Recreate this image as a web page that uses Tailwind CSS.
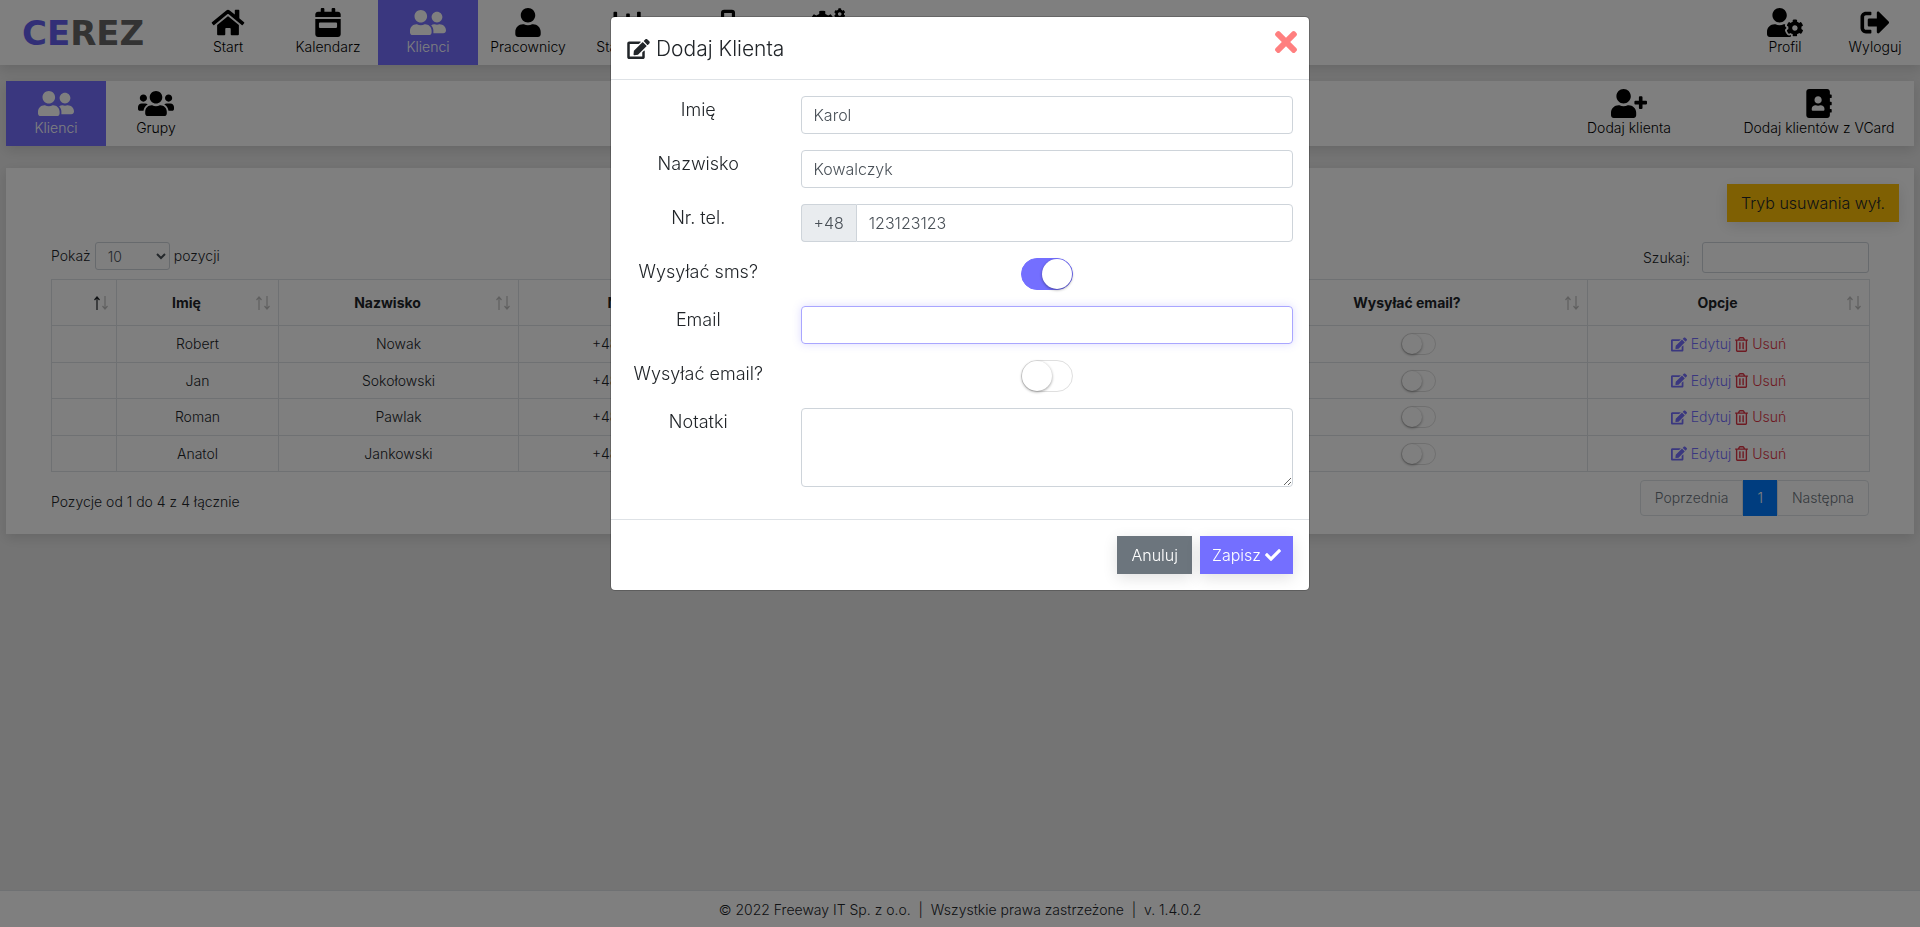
<!DOCTYPE html>
<html lang="pl">
<head>
    <meta charset="UTF-8">
    <meta name="viewport" content="width=device-width, initial-scale=1.0">
    <title>CEREZ - Klienci</title>
    <script src="https://cdn.jsdelivr.net/npm/@tailwindcss/browser@4"></script>
    <style>
        body {
            font-family: 'Century Gothic', Inter, sans-serif;
        }
    </style>
</head>
<body class="min-h-screen flex flex-col bg-[#e9e9e9] text-[#212529] text-sm font-light">

    <!-- icons -->
    <svg class="hidden">
        <symbol id="i-home" viewBox="0 0 576 512"><path d="M280.37 148.26L96 300.11V464a16 16 0 0 0 16 16l112.06-.29a16 16 0 0 0 15.92-16V368a16 16 0 0 1 16-16h64a16 16 0 0 1 16 16v95.64a16 16 0 0 0 16 16.05L464 480a16 16 0 0 0 16-16V300L295.67 148.26a12.19 12.19 0 0 0-15.3 0zM571.6 251.47L488 182.56V44.05a12 12 0 0 0-12-12h-56a12 12 0 0 0-12 12v72.61L318.47 43a48 48 0 0 0-61 0L4.34 251.47a12 12 0 0 0-1.6 16.9l25.5 31A12 12 0 0 0 45.15 301l235.22-193.74a12.19 12.19 0 0 1 15.3 0L530.9 301a12 12 0 0 0 16.9-1.6l25.5-31a12 12 0 0 0-1.7-16.93z"/></symbol>
        <symbol id="i-calendar" viewBox="0 0 448 512"><path d="M0 464c0 26.5 21.5 48 48 48h352c26.5 0 48-21.5 48-48V192H0v272zm64-192c0-8.8 7.2-16 16-16h288c8.8 0 16 7.2 16 16v64c0 8.8-7.2 16-16 16H80c-8.8 0-16-7.2-16-16v-64zm336-208h-48V16c0-8.8-7.2-16-16-16h-32c-8.8 0-16 7.2-16 16v48H160V16c0-8.8-7.2-16-16-16h-32c-8.8 0-16 7.2-16 16v48H48C21.5 64 0 85.5 0 112v48h448v-48c0-26.5-21.5-48-48-48z"/></symbol>
        <symbol id="i-friends" viewBox="0 0 640 512"><path d="M192 256c61.9 0 112-50.1 112-112S253.9 32 192 32 80 82.1 80 144s50.1 112 112 112zm76.8 32h-8.3c-20.8 10-43.9 16-68.5 16s-47.6-6-68.5-16h-8.3C51.6 288 0 339.6 0 403.2V432c0 26.5 21.5 48 48 48h288c26.5 0 48-21.5 48-48v-28.8c0-63.6-51.6-115.2-115.2-115.2zM480 256c53 0 96-43 96-96s-43-96-96-96-96 43-96 96 43 96 96 96zm48 32h-3.8c-13.9 4.8-28.6 8-44.2 8s-30.3-3.2-44.2-8H432c-20.4 0-39.2 5.9-55.7 15.4 24.4 26.3 39.7 61.2 39.7 99.8v38.4c0 2.2-.5 4.3-.6 6.4H592c26.5 0 48-21.5 48-48 0-61.9-50.1-112-112-112z"/></symbol>
        <symbol id="i-user" viewBox="0 0 448 512"><path d="M224 256c70.7 0 128-57.3 128-128S294.7 0 224 0 96 57.3 96 128s57.3 128 128 128zm89.6 32h-16.7c-22.2 10.2-46.9 16-72.9 16s-50.6-5.8-72.9-16h-16.7C60.2 288 0 348.2 0 422.4V464c0 26.5 21.5 48 48 48h352c26.5 0 48-21.5 48-48v-41.6c0-74.2-60.2-134.4-134.4-134.4z"/></symbol>
        <symbol id="i-chart" viewBox="0 0 512 512"><path d="M332.8 320h38.4c6.4 0 12.8-6.4 12.8-12.8V172.8c0-6.4-6.4-12.8-12.8-12.8h-38.4c-6.4 0-12.8 6.4-12.8 12.8v134.4c0 6.4 6.4 12.8 12.8 12.8zm96 0h38.4c6.4 0 12.8-6.4 12.8-12.8V76.8c0-6.4-6.4-12.8-12.8-12.8h-38.4c-6.4 0-12.8 6.4-12.8 12.8v230.4c0 6.4 6.4 12.8 12.8 12.8zm-288 0h38.4c6.4 0 12.8-6.4 12.8-12.8v-70.4c0-6.4-6.4-12.8-12.8-12.8h-38.4c-6.4 0-12.8 6.4-12.8 12.8v70.4c0 6.4 6.4 12.8 12.8 12.8zm96 0h38.4c6.4 0 12.8-6.4 12.8-12.8V108.8c0-6.4-6.4-12.8-12.8-12.8h-38.4c-6.4 0-12.8 6.4-12.8 12.8v198.4c0 6.4 6.4 12.8 12.8 12.8zM496 384H64V80c0-8.84-7.16-16-16-16H16C7.16 64 0 71.16 0 80v336c0 17.67 14.33 32 32 32h464c8.84 0 16-7.16 16-16v-32c0-8.84-7.16-16-16-16z"/></symbol>
        <symbol id="i-phone" viewBox="0 0 320 512"><rect x="64" y="60" width="192" height="392" rx="28" fill="none" stroke="currentColor" stroke-width="56"/></symbol>
        <symbol id="i-gear" viewBox="350 195 292 314"><path d="M610.5 373.3c2.6-14.1 2.6-28.5 0-42.6l25.8-14.9c3-1.7 4.3-5.2 3.3-8.5-6.7-21.6-18.2-41.2-33.2-57.4-2.3-2.5-6-3.1-9-1.4l-25.8 14.9c-10.9-9.3-23.4-16.5-36.9-21.3v-29.8c0-3.4-2.4-6.4-5.7-7.1-22.3-5-45-4.8-66.2 0-3.3.7-5.7 3.7-5.7 7.1v29.8c-13.5 4.8-26 12-36.9 21.3l-25.8-14.9c-2.9-1.7-6.7-1.1-9 1.4-15 16.2-26.5 35.8-33.2 57.4-1 3.3.4 6.8 3.3 8.5l25.8 14.9c-2.6 14.1-2.6 28.5 0 42.6l-25.8 14.9c-3 1.7-4.3 5.2-3.3 8.5 6.7 21.6 18.2 41.1 33.2 57.4 2.3 2.5 6 3.1 9 1.4l25.8-14.9c10.9 9.3 23.4 16.5 36.9 21.3v29.8c0 3.4 2.4 6.4 5.7 7.1 22.3 5 45 4.8 66.2 0 3.3-.7 5.7-3.7 5.7-7.1v-29.8c13.5-4.8 26-12 36.9-21.3l25.8 14.9c2.9 1.7 6.7 1.1 9-1.4 15-16.2 26.5-35.8 33.2-57.4 1-3.3-.4-6.8-3.3-8.5l-25.8-14.9zM496 400.5c-26.8 0-48.5-21.8-48.5-48.5s21.8-48.5 48.5-48.5 48.5 21.8 48.5 48.5-21.7 48.5-48.5 48.5z"/></symbol>
        <symbol id="i-cogs" viewBox="0 0 640 512"><use href="#i-gear" x="0" y="38" width="436" height="436"/><use href="#i-gear" x="424" y="0" width="208" height="208"/><use href="#i-gear" x="424" y="300" width="208" height="208"/></symbol>
        <symbol id="i-user-cog" viewBox="0 0 640 512"><use href="#i-gear" x="350" y="195" width="292" height="314"/><path d="M224 256c70.7 0 128-57.3 128-128S294.7 0 224 0 96 57.3 96 128s57.3 128 128 128zm201.2 226.5c-2.3-1.2-4.6-2.6-6.8-3.9l-7.9 4.6c-6 3.4-12.8 5.3-19.6 5.3-10.9 0-21.4-4.6-28.9-12.6-18.3-19.8-32.3-43.9-40.2-69.6-5.5-17.7 1.9-36.4 17.9-45.7l7.9-4.6c-.1-2.6-.1-5.2 0-7.8l-7.9-4.6c-16-9.2-23.4-28-17.9-45.7.9-2.9 2.2-5.8 3.2-8.7-3.8-.3-7.5-1.2-11.4-1.2h-16.7c-22.2 10.2-46.9 16-72.9 16s-50.6-5.8-72.9-16h-16.7C60.2 288 0 348.2 0 422.4V464c0 26.5 21.5 48 48 48h352c10.1 0 19.5-3.2 27.2-8.5-1.2-3.8-2-7.7-2-11.8v-9.2z"/></symbol>
        <symbol id="i-logout" viewBox="0 0 512 512"><path d="M497 273L329 441c-15 15-41 4.5-41-17v-96H152c-13.3 0-24-10.7-24-24v-96c0-13.3 10.7-24 24-24h136V88c0-21.4 25.9-32 41-17l168 168c9.3 9.4 9.3 24.6 0 34zM192 436v-40c0-6.6-5.4-12-12-12H96c-17.7 0-32-14.3-32-32V160c0-17.7 14.3-32 32-32h84c6.6 0 12-5.4 12-12V76c0-6.6-5.4-12-12-12H96c-53 0-96 43-96 96v192c0 53 43 96 96 96h84c6.6 0 12-5.4 12-12z"/></symbol>
        <symbol id="i-users" viewBox="0 0 640 512"><path d="M96 224c35.3 0 64-28.7 64-64s-28.7-64-64-64-64 28.7-64 64 28.7 64 64 64zm448 0c35.3 0 64-28.7 64-64s-28.7-64-64-64-64 28.7-64 64 28.7 64 64 64zm32 32h-64c-17.6 0-33.5 7.1-45.1 18.6 40.3 22.1 68.9 62 75.1 109.4h66c17.7 0 32-14.3 32-32v-32c0-35.3-28.7-64-64-64zm-256 0c61.9 0 112-50.1 112-112S381.9 32 320 32 208 82.1 208 144s50.1 112 112 112zm76.8 32h-8.3c-20.8 10-43.9 16-68.5 16s-47.6-6-68.5-16h-8.3C179.6 288 128 339.6 128 403.2V432c0 26.5 21.5 48 48 48h288c26.5 0 48-21.5 48-48v-28.8c0-63.6-51.6-115.2-115.2-115.2zm-223.7-13.4C161.5 263.1 145.6 256 128 256H64c-35.3 0-64 28.7-64 64v32c0 17.7 14.3 32 32 32h65.9c6.3-47.4 34.9-87.3 75.2-109.4z"/></symbol>
        <symbol id="i-user-plus" viewBox="0 0 640 512"><path d="M624 208h-64v-64c0-8.8-7.2-16-16-16h-32c-8.8 0-16 7.2-16 16v64h-64c-8.8 0-16 7.2-16 16v32c0 8.8 7.2 16 16 16h64v64c0 8.8 7.2 16 16 16h32c8.8 0 16-7.2 16-16v-64h64c8.8 0 16-7.2 16-16v-32c0-8.8-7.2-16-16-16zm-400 48c70.7 0 128-57.3 128-128S294.7 0 224 0 96 57.3 96 128s57.3 128 128 128zm89.6 32h-16.7c-22.2 10.2-46.9 16-72.9 16s-50.6-5.8-72.9-16h-16.7C60.2 288 0 348.2 0 422.4V464c0 26.5 21.5 48 48 48h352c26.5 0 48-21.5 48-48v-41.6c0-74.2-60.2-134.4-134.4-134.4z"/></symbol>
        <symbol id="i-book" viewBox="0 0 448 512"><path d="M436 160c6.6 0 12-5.4 12-12v-40c0-6.6-5.4-12-12-12h-20V48c0-26.5-21.5-48-48-48H48C21.5 0 0 21.5 0 48v416c0 26.5 21.5 48 48 48h320c26.5 0 48-21.5 48-48v-48h20c6.6 0 12-5.4 12-12v-40c0-6.6-5.4-12-12-12h-20v-64h20c6.6 0 12-5.4 12-12v-40c0-6.6-5.4-12-12-12h-20v-64h20zm-228-32c35.3 0 64 28.7 64 64s-28.7 64-64 64-64-28.7-64-64 28.7-64 64-64zm112 236.8c0 10.6-10 19.2-22.4 19.2H118.4C106 384 96 375.4 96 364.8v-19.2c0-31.8 30.1-57.6 67.2-57.6h5c12.3 5.1 25.7 8 39.8 8s27.6-2.9 39.8-8h5c37.1 0 67.2 25.8 67.2 57.6v19.2z"/></symbol>
        <symbol id="i-edit" viewBox="0 0 576 512"><path d="M402.6 83.2l90.2 90.2c3.8 3.8 3.8 10 0 13.8L274.4 405.6l-92.8 10.3c-12.4 1.4-22.9-9.1-21.5-21.5l10.3-92.8L388.8 83.2c3.8-3.8 10-3.8 13.8 0zm162-22.9l-48.8-48.8c-15.2-15.2-39.9-15.2-55.2 0l-35.4 35.4c-3.8 3.8-3.8 10 0 13.8l90.2 90.2c3.8 3.8 10 3.8 13.8 0l35.4-35.4c15.2-15.3 15.2-40 0-55.2zM384 346.2V448H64V128h229.8c3.2 0 6.2-1.3 8.5-3.5l40-40c7.6-7.6 2.2-20.5-8.5-20.5H48C21.5 64 0 85.5 0 112v352c0 26.5 21.5 48 48 48h352c26.5 0 48-21.5 48-48V306.2c0-10.7-12.9-16-20.5-8.5l-40 40c-2.2 2.3-3.5 5.3-3.5 8.5z"/></symbol>
        <symbol id="i-trash" viewBox="0 0 448 512"><path d="M268 416h24a12 12 0 0 0 12-12V188a12 12 0 0 0-12-12h-24a12 12 0 0 0-12 12v216a12 12 0 0 0 12 12zM432 80h-82.41l-34-56.7A48 48 0 0 0 274.41 0H173.59a48 48 0 0 0-41.16 23.3L98.41 80H16A16 16 0 0 0 0 96v16a16 16 0 0 0 16 16h16v336a48 48 0 0 0 48 48h288a48 48 0 0 0 48-48V128h16a16 16 0 0 0 16-16V96a16 16 0 0 0-16-16zM171.84 50.91A6 6 0 0 1 177 48h94a6 6 0 0 1 5.15 2.91L293.61 80H154.39zM368 464H80V128h288zm-212-48h24a12 12 0 0 0 12-12V188a12 12 0 0 0-12-12h-24a12 12 0 0 0-12 12v216a12 12 0 0 0 12 12z"/></symbol>
        <symbol id="i-times" viewBox="0 80 352 352"><path d="M242.72 256l100.07-100.07c12.28-12.28 12.28-32.19 0-44.48l-22.24-22.24c-12.28-12.28-32.19-12.28-44.48 0L176 189.28 75.93 89.21c-12.28-12.28-32.19-12.28-44.48 0L9.21 111.45c-12.28 12.28-12.28 32.19 0 44.48L109.28 256 9.21 356.07c-12.28 12.28-12.28 32.19 0 44.48l22.24 22.24c12.28 12.28 32.2 12.28 44.48 0L176 322.72l100.07 100.07c12.28 12.28 32.2 12.28 44.48 0l22.24-22.24c12.28-12.28 12.28-32.19 0-44.48L242.72 256z"/></symbol>
        <symbol id="i-check" viewBox="0 0 512 512"><path d="M173.898 439.404l-166.4-166.4c-9.997-9.997-9.997-26.206 0-36.204l36.203-36.204c9.997-9.998 26.207-9.998 36.204 0L192 312.69 432.095 72.596c9.997-9.997 26.207-9.997 36.204 0l36.203 36.204c9.997 9.997 9.997 26.206 0 36.204l-294.4 294.401c-9.998 9.997-26.207 9.997-36.204-.001z"/></symbol>
        <symbol id="i-up" viewBox="0 0 6 14"><path d="M3 14V1M0.500 4L3 1l2.500 3" fill="none" stroke="currentColor" stroke-width="1.200"/></symbol>
        <symbol id="i-down" viewBox="0 0 6 14"><path d="M3 0v13M0.500 10L3 13l2.500-3" fill="none" stroke="currentColor" stroke-width="1.200"/></symbol>
    </svg>

    <nav class="flex items-stretch bg-white text-black shadow-[0_4px_12px_rgba(0,0,0,0.12)]">
        <a href="#" class="flex items-center w-[178px] pl-[22px] text-[34px] leading-none font-bold text-[#666] font-['DejaVu_Sans']"><span class="text-[#645eee]">CE</span>REZ</a>
        <a href="#" class="w-[100px] pt-2 pb-2 flex flex-col items-center"><svg class="w-9 h-[29px] fill-current"><use href="#i-home"/></svg><span class="leading-5">Start</span></a>
        <a href="#" class="w-[100px] pt-2 pb-2 flex flex-col items-center"><svg class="w-9 h-[29px] fill-current"><use href="#i-calendar"/></svg><span class="leading-5">Kalendarz</span></a>
        <a href="#" class="w-[100px] pt-2 pb-2 flex flex-col items-center bg-[#746fff] text-white"><svg class="w-9 h-[29px] fill-current"><use href="#i-friends"/></svg><span class="leading-5">Klienci</span></a>
        <a href="#" class="w-[100px] pt-2 pb-2 flex flex-col items-center"><svg class="w-9 h-[29px] fill-current"><use href="#i-user"/></svg><span class="leading-5">Pracownicy</span></a>
        <a href="#" class="w-[100px] pt-2 pb-2 flex flex-col items-center"><svg class="w-9 h-[29px] fill-current"><use href="#i-chart"/></svg><span class="leading-5">Statystyki</span></a>
        <a href="#" class="w-[100px] pt-2 pb-2 flex flex-col items-center"><svg class="w-9 h-[29px] fill-current"><use href="#i-phone"/></svg><span class="leading-5">SMS</span></a>
        <a href="#" class="w-[100px] pt-2 pb-2 flex flex-col items-center"><svg class="w-9 h-[29px] fill-current"><use href="#i-cogs"/></svg><span class="leading-5">Ustawienia</span></a>
        <a href="#" class="ml-auto w-[90px] pt-2 pb-2 flex flex-col items-center"><svg class="w-9 h-[29px] fill-current"><use href="#i-user-cog"/></svg><span class="leading-5">Profil</span></a>
        <a href="#" class="w-[90px] pt-2 pb-2 flex flex-col items-center"><svg class="w-9 h-[29px] fill-current"><use href="#i-logout"/></svg><span class="leading-5">Wyloguj</span></a>
    </nav>

    <div class="mx-[6px] mt-4 flex bg-white text-black shadow-[0_4px_12px_rgba(0,0,0,0.12)]">
        <a href="#" class="w-[100px] pt-2 pb-2 flex flex-col items-center bg-[#746fff] text-white"><svg class="w-9 h-[29px] fill-current"><use href="#i-friends"/></svg><span class="leading-5">Klienci</span></a>
        <a href="#" class="w-[100px] pt-2 pb-2 flex flex-col items-center"><svg class="w-9 h-[29px] fill-current"><use href="#i-users"/></svg><span class="leading-5">Grupy</span></a>
        <a href="#" class="ml-auto w-[190px] pt-2 pb-2 flex flex-col items-center"><svg class="w-9 h-[29px] fill-current"><use href="#i-user-plus"/></svg><span class="leading-5">Dodaj klienta</span></a>
        <a href="#" class="w-[190px] pt-2 pb-2 flex flex-col items-center"><svg class="w-9 h-[29px] fill-current"><use href="#i-book"/></svg><span class="leading-5">Dodaj klientów z VCard</span></a>
    </div>

    <main class="mx-[6px] mt-[22px] pt-4 pb-[18px] bg-white shadow-[0_4px_12px_rgba(0,0,0,0.12)]">
        <div class="flex justify-end pr-[15px]">
            <button class="h-[38px] px-[14px] bg-[#ffc107] text-base shadow-[0_4px_15px_rgba(0,0,0,0.12)]">Tryb usuwania wył.</button>
        </div>

        <div class="mx-[45px] mt-5">
            <div class="flex justify-between items-start">
                <label class="flex items-center">Pokaż
                    <select class="mx-1 w-[75px] h-7 pl-2 border border-[#ced4da] rounded-[3px] text-[#495057]">
                        <option>10</option>
                        <option>25</option>
                        <option>50</option>
                    </select>
                    pozycji
                </label>
                <label class="flex items-center">Szukaj:
                    <input type="search" class="ml-3 w-[167px] h-[31px] px-2 border border-[#ced4da] rounded-[3px]">
                </label>
            </div>

            <table class="mt-[6px] w-full table-fixed border-collapse text-center">
                <colgroup>
                    <col class="w-[65px]"><col class="w-[162px]"><col class="w-[240px]"><col class="w-[245px]">
                    <col class="w-[245px]"><col class="w-[240px]"><col class="w-[339px]"><col class="w-[282px]">
                </colgroup>
                <thead><tr id="table-head"></tr></thead>
                <tbody id="table-body"></tbody>
            </table>

            <div class="mt-2 flex justify-between items-center">
                <p class="pt-2">Pozycje od 1 do 4 z 4 łącznie</p>
                <div class="flex h-9 text-[#6c757d]">
                    <button class="px-[14px] border border-[#dee2e6] rounded-l-[4px]">Poprzednia</button>
                    <button class="px-[14px] bg-[#007bff] text-white">1</button>
                    <button class="px-[14px] border border-[#dee2e6] rounded-r-[4px]">Następna</button>
                </div>
            </div>
        </div>
    </main>

    <footer class="mt-auto h-[37px] pt-[2px] flex items-center justify-center bg-white border-t border-[#dee2e6]">
        <p>© 2022 Freeway IT Sp. z o.o. &nbsp;|&nbsp; Wszystkie prawa zastrzeżone &nbsp;|&nbsp; v. 1.4.0.2</p>
    </footer>

    <!-- modal -->
    <div class="fixed inset-0 bg-black/50 flex justify-center items-start pt-4">
        <div role="dialog" aria-labelledby="modal-title" class="w-[700px] bg-white bg-clip-padding border border-black/20 rounded-[5px]">
            <div class="flex items-start justify-between pt-[14px] pb-[15px] pl-4 pr-3 border-b border-[#dee2e6]">
                <h5 id="modal-title" class="flex items-center gap-[6px] h-[33px] pt-[2px] text-[21px]"><svg class="w-[23px] h-5 fill-current"><use href="#i-edit"/></svg>Dodaj Klienta</h5>
                <button aria-label="Zamknij" class="text-[#ff7f7f]"><svg class="w-[22px] h-[22px] fill-current"><use href="#i-times"/></svg></button>
            </div>

            <form id="client-form" class="pt-4 pb-8 flex flex-col gap-4 text-base">
                <div class="flex items-start">
                    <label for="name" class="w-1/4 text-center text-lg leading-[27px]">Imię</label>
                    <div class="flex-1 pl-[15px] pr-4"><input id="name" type="text" value="Karol" class="block w-full h-[38px] px-3 border border-[#ced4da] rounded-[4px] text-[#495057] outline-none"></div>
                </div>
                <div class="flex items-start">
                    <label for="surname" class="w-1/4 text-center text-lg leading-[27px]">Nazwisko</label>
                    <div class="flex-1 pl-[15px] pr-4"><input id="surname" type="text" value="Kowalczyk" class="block w-full h-[38px] px-3 border border-[#ced4da] rounded-[4px] text-[#495057] outline-none"></div>
                </div>
                <div class="flex items-start">
                    <label for="phone" class="w-1/4 text-center text-lg leading-[27px]">Nr. tel.</label>
                    <div class="flex-1 pl-[15px] pr-4 flex text-[#495057]">
                        <span class="flex items-center px-3 bg-[#e9ecef] border border-r-0 border-[#ced4da] rounded-l-[4px]">+48</span>
                        <input id="phone" type="tel" value="123123123" class="flex-1 h-[38px] px-3 border border-[#ced4da] rounded-r-[4px] outline-none">
                    </div>
                </div>
                <div class="flex items-start">
                    <label for="send-sms" class="w-1/4 text-center text-lg leading-[27px]">Wysyłać sms?</label>
                    <div class="flex-1 pl-[15px] pr-4 flex justify-center"><input id="send-sms" type="checkbox" checked class="appearance-none w-[52px] h-8 rounded-full border border-[#dfdfdf] flex before:content-[''] before:w-[30px] before:h-[30px] before:rounded-full before:bg-white before:shadow-[0_1px_3px_rgba(0,0,0,0.4)] checked:bg-[#746fff] checked:border-[#746fff] checked:justify-end"></div>
                </div>
                <div class="flex items-start">
                    <label for="email" class="w-1/4 text-center text-lg leading-[27px]">Email</label>
                    <div class="flex-1 pl-[15px] pr-4"><input id="email" type="email" class="block w-full h-[38px] px-3 border border-[#a9a6ff] rounded-[4px] text-[#495057] outline-none shadow-[0_0_8px_rgba(116,111,255,0.25)]"></div>
                </div>
                <div class="flex items-start">
                    <label for="send-email" class="w-1/4 text-center text-lg leading-[27px]">Wysyłać email?</label>
                    <div class="flex-1 pl-[15px] pr-4 flex justify-center"><input id="send-email" type="checkbox" class="appearance-none w-[52px] h-8 rounded-full border border-[#dfdfdf] flex before:content-[''] before:w-[30px] before:h-[30px] before:rounded-full before:bg-white before:shadow-[0_1px_3px_rgba(0,0,0,0.4)] checked:bg-[#746fff] checked:border-[#746fff] checked:justify-end"></div>
                </div>
                <div class="flex items-start">
                    <label for="notes" class="w-1/4 text-center text-lg leading-[27px]">Notatki</label>
                    <div class="flex-1 pl-[15px] pr-4"><textarea id="notes" class="block w-full h-[79px] px-3 py-[6px] border border-[#ced4da] rounded-[4px] text-[#495057] outline-none"></textarea></div>
                </div>
            </form>

            <div class="flex justify-end gap-2 p-4 border-t border-[#dee2e6] text-base text-white">
                <button class="h-[38px] px-[14px] bg-[#6c757d] shadow-[0_4px_15px_rgba(0,0,0,0.12)]">Anuluj</button>
                <button form="client-form" type="button" class="h-[38px] px-3 flex items-center gap-1 bg-[#746fff] shadow-[0_4px_15px_rgba(0,0,0,0.12)]">Zapisz <svg class="w-4 h-4 fill-current"><use href="#i-check"/></svg></button>
            </div>
        </div>
    </div>

    <script>
        const columns = ['', 'Imię', 'Nazwisko', 'Nr. tel.', 'Email', 'Wysyłać sms?', 'Wysyłać email?', 'Opcje'];
        const clients = [
            ['Robert', 'Nowak'],
            ['Jan', 'Sokołowski'],
            ['Roman', 'Pawlak'],
            ['Anatol', 'Jankowski']
        ];

        const toggle = (label, on) => `<input type="checkbox" aria-label="${label}" ${on ? 'checked' : ''} class="appearance-none mx-auto w-[35px] h-[22px] rounded-full border border-[#dfdfdf] flex before:content-[''] before:w-5 before:h-5 before:rounded-full before:bg-white before:shadow-[0_1px_3px_rgba(0,0,0,0.4)] checked:bg-[#746fff] checked:border-[#746fff] checked:justify-end">`;

        document.getElementById('table-head').innerHTML = columns.map((name, i) => `
            <th class="h-[46px] pr-2 border border-[#dee2e6] font-bold">
                <div class="flex items-center">
                    <span class="flex-1">${name}</span>
                    <svg class="w-[6px] h-[14px] ${i === 0 ? 'text-[#212529]' : 'text-[#c0c0c0]'}"><use href="#i-up"/></svg>
                    <svg class="w-[6px] h-[14px] ml-[2px] text-[#c0c0c0]"><use href="#i-down"/></svg>
                </div>
            </th>`).join('');

        document.getElementById('table-body').innerHTML = clients.map(([name, surname]) => `
            <tr class="odd:h-[37px] even:h-9">
                <td class="border border-[#dee2e6]"></td>
                <td class="border border-[#dee2e6]">${name}</td>
                <td class="border border-[#dee2e6]">${surname}</td>
                <td class="border border-[#dee2e6]">+48 123123123</td>
                <td class="border border-[#dee2e6]"></td>
                <td class="border border-[#dee2e6]">${toggle('Wysyłać sms?', true)}</td>
                <td class="border border-[#dee2e6]">${toggle('Wysyłać email?', false)}</td>
                <td class="border border-[#dee2e6]">
                    <div class="flex justify-center gap-1">
                        <a href="#" class="flex items-center gap-1 text-[#746fff]"><svg class="w-4 h-[15px] fill-current"><use href="#i-edit"/></svg>Edytuj</a>
                        <a href="#" class="flex items-center gap-1 text-[#dc3545]"><svg class="w-[13px] h-[15px] fill-current"><use href="#i-trash"/></svg>Usuń</a>
                    </div>
                </td>
            </tr>`).join('');
    </script>
</body>
</html>
